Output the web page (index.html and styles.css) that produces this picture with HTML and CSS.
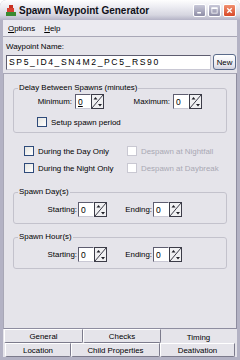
FILE: index.html
```html
<!DOCTYPE html>
<html lang="en">
<head>
    <meta charset="UTF-8">
    <title>Spawn Waypoint Generator</title>
    <link rel="stylesheet" href="styles.css">
</head>
<body>
    <div class="window">
        <div class="titlebar">
            <svg class="app-icon" width="10" height="11" viewBox="0 0 10 11">
                <rect x="3" y="0" width="4" height="3" fill="#c83020"/>
                <rect x="1" y="3" width="7" height="4" fill="#d84030"/>
                <rect x="0" y="7" width="10" height="4" fill="#3a8a30"/>
            </svg>
            <span class="title">Spawn Waypoint Generator</span>
            <div class="caption">
                <span class="cap-btn"><svg width="12" height="12" viewBox="0 0 12 12"><rect x="3" y="8" width="5" height="2" fill="#fff"/></svg></span>
                <span class="cap-btn"><svg width="12" height="12" viewBox="0 0 12 12"><rect x="2.5" y="2.5" width="7" height="7" fill="none" stroke="#fff"/><rect x="2" y="2" width="8" height="2" fill="#fff"/></svg></span>
                <span class="cap-btn close"><svg width="12" height="12" viewBox="0 0 12 12"><path d="M3 3 L9 9 M9 3 L3 9" stroke="#fff" stroke-width="1.8"/></svg></span>
            </div>
        </div>
        <div class="body">
            <div class="menubar">
                <span class="menu"><u>O</u>ptions</span>
                <span class="menu"><u>H</u>elp</span>
            </div>
            <div class="client">
                <div class="name-area">
                    <label class="name-label" for="wpname">Waypoint Name:</label>
                    <div class="name-row">
                        <input id="wpname" class="field name-field" type="text" value="SP5_ID4_SN4M2_PC5_RS90">
                        <button class="btn">New</button>
                    </div>
                </div>

                <div class="tabpage">
                    <fieldset class="group delay">
                        <legend>Delay Between Spawns (minutes)</legend>
                        <div class="spin-row">
                            <span class="lbl min-lbl">Minimum:</span>
                            <span class="spin"><span class="spin-val caret">0</span><svg class="spin-btn" viewBox="0 0 13 15"><rect x="0.5" y="0.5" width="12" height="14" fill="#f0f0f2" stroke="#3c3c48"/><path d="M1 14 L12 1" stroke="#3c3c48"/><path d="M2.5 5.5 L4.5 3 L6.5 5.5 Z M7 10 L11 10 L9 12.5 Z" fill="#202028"/></svg></span>
                            <span class="lbl max-lbl">Maximum:</span>
                            <span class="spin"><span class="spin-val">0</span><svg class="spin-btn" viewBox="0 0 13 15"><rect x="0.5" y="0.5" width="12" height="14" fill="#f0f0f2" stroke="#3c3c48"/><path d="M1 14 L12 1" stroke="#3c3c48"/><path d="M2.5 5.5 L4.5 3 L6.5 5.5 Z M7 10 L11 10 L9 12.5 Z" fill="#202028"/></svg></span>
                        </div>
                        <label class="check period"><span class="box"></span>Setup spawn period</label>
                    </fieldset>

                    <div class="check-grid">
                        <label class="check"><span class="box"></span>During the Day Only</label>
                        <label class="check off"><span class="box"></span>Despawn at Nightfall</label>
                        <label class="check"><span class="box"></span>During the Night Only</label>
                        <label class="check off"><span class="box"></span>Despawn at Daybreak</label>
                    </div>

                    <fieldset class="group range">
                        <legend>Spawn Day(s)</legend>
                        <div class="spin-row">
                            <span class="lbl start-lbl">Starting:</span>
                            <span class="spin"><span class="spin-val">0</span><svg class="spin-btn" viewBox="0 0 13 15"><rect x="0.5" y="0.5" width="12" height="14" fill="#f0f0f2" stroke="#3c3c48"/><path d="M1 14 L12 1" stroke="#3c3c48"/><path d="M2.5 5.5 L4.5 3 L6.5 5.5 Z M7 10 L11 10 L9 12.5 Z" fill="#202028"/></svg></span>
                            <span class="lbl end-lbl">Ending:</span>
                            <span class="spin"><span class="spin-val">0</span><svg class="spin-btn" viewBox="0 0 13 15"><rect x="0.5" y="0.5" width="12" height="14" fill="#f0f0f2" stroke="#3c3c48"/><path d="M1 14 L12 1" stroke="#3c3c48"/><path d="M2.5 5.5 L4.5 3 L6.5 5.5 Z M7 10 L11 10 L9 12.5 Z" fill="#202028"/></svg></span>
                        </div>
                    </fieldset>

                    <fieldset class="group range">
                        <legend>Spawn Hour(s)</legend>
                        <div class="spin-row">
                            <span class="lbl start-lbl">Starting:</span>
                            <span class="spin"><span class="spin-val">0</span><svg class="spin-btn" viewBox="0 0 13 15"><rect x="0.5" y="0.5" width="12" height="14" fill="#f0f0f2" stroke="#3c3c48"/><path d="M1 14 L12 1" stroke="#3c3c48"/><path d="M2.5 5.5 L4.5 3 L6.5 5.5 Z M7 10 L11 10 L9 12.5 Z" fill="#202028"/></svg></span>
                            <span class="lbl end-lbl">Ending:</span>
                            <span class="spin"><span class="spin-val">0</span><svg class="spin-btn" viewBox="0 0 13 15"><rect x="0.5" y="0.5" width="12" height="14" fill="#f0f0f2" stroke="#3c3c48"/><path d="M1 14 L12 1" stroke="#3c3c48"/><path d="M2.5 5.5 L4.5 3 L6.5 5.5 Z M7 10 L11 10 L9 12.5 Z" fill="#202028"/></svg></span>
                        </div>
                    </fieldset>
                </div>

                <div class="tabs">
                    <div class="tab-row near">
                        <span class="tab t-general">General</span>
                        <span class="tab t-checks">Checks</span>
                        <span class="tab t-timing active">Timing</span>
                    </div>
                    <div class="tab-row far">
                        <span class="tab t-location">Location</span>
                        <span class="tab t-child">Child Properties</span>
                        <span class="tab t-deact">Deativation</span>
                    </div>
                </div>
            </div>
        </div>
    </div>
</body>
</html>
```

FILE: styles.css
```css
* {
    box-sizing: border-box;
}
body {
    margin: 0;
    background: #fff;
    font-family: "Liberation Sans", Arial, sans-serif;
    font-size: 7.9px;
    color: #000;
}

.window {
    width: 240px;
    height: 360px;
    display: flex;
    flex-direction: column;
    background: #b3b2c4;
    border-radius: 6px 6px 0 0;
    overflow: hidden;
}

.titlebar {
    height: 20px;
    flex: none;
    display: flex;
    align-items: center;
    padding: 0 4px 0 6px;
    background: linear-gradient(#fefefe, #ececf2 35%, #d6d6e0 75%, #b4b3c6);
}
.app-icon {
    flex: none;
}
.title {
    margin-left: 3px;
    font-weight: bold;
    font-size: 10px;
    color: #101018;
}
.caption {
    margin-left: auto;
    display: flex;
    gap: 2px;
}
.cap-btn {
    width: 13px;
    height: 13px;
    border: 1px solid #fff;
    border-radius: 2px;
    background: linear-gradient(#c8c8d8, #8e8da6);
    display: flex;
    align-items: center;
    justify-content: center;
}
.cap-btn svg {
    width: 9px;
    height: 9px;
}
.cap-btn.close {
    background: linear-gradient(#f09070, #d84828);
}

.body {
    flex: 1;
    display: flex;
    flex-direction: column;
    padding: 0 3px 4px 3px;
}
.menubar {
    height: 16px;
    flex: none;
    display: flex;
    align-items: center;
    gap: 9px;
    padding-left: 5px;
    background: #ebeaf0;
}
.client {
    flex: 1;
    display: flex;
    flex-direction: column;
    background: #e5e4ea;
    border-top: 1px solid #a8a7b6;
}

.name-area {
    padding: 5px 1px 3px 3px;
}
.name-label {
    display: block;
    margin-bottom: 2px;
    line-height: 10px;
}
.name-row {
    display: flex;
    align-items: center;
    gap: 2px;
}
.field {
    background: #fff;
    border: 1px solid;
    border-color: #5e5d70 #c9c8d4 #c9c8d4 #5e5d70;
}
.name-field {
    width: 206px;
    height: 15px;
    margin: 0;
    padding: 0 2px;
    font: inherit;
    font-size: 8.6px;
    letter-spacing: 1.6px;
    outline: none;
}
.btn {
    width: 23px;
    height: 16px;
    margin: 0;
    padding: 0;
    font: inherit;
    border: 1px solid #5a6a8a;
    border-radius: 3px;
    background: linear-gradient(#ffffff, #e8e8f0 70%, #d0d0dc);
}

.tabpage {
    height: 256px;
    border: 1px solid #8e8da0;
    border-color: #a8a7b6 #8e8da0 #8e8da0 #a8a7b6;
    padding: 9px 9px 0 9px;
}

.group {
    margin: 0;
    padding: 0;
    border: 1px solid #c3c2cc;
    border-radius: 3px;
}
.group legend {
    padding: 0 1px;
    margin-left: 4px;
    line-height: 10px;
}

.spin-row {
    display: flex;
    align-items: center;
    height: 15px;
}
.lbl {
    text-align: right;
}
.spin {
    display: flex;
    height: 15px;
}
.spin-val {
    width: 16px;
    height: 15px;
    padding: 1px 2px;
    background: #fff;
    border: 1px solid;
    border-color: #5e5d70 #fff #c9c8d4 #5e5d70;
    line-height: 12px;
    font-size: 8.5px;
}
.spin-val.caret {
    text-decoration: underline;
}
.spin-btn {
    width: 13px;
    height: 15px;
}

.delay {
    height: 50px;
}
.delay .spin-row {
    margin-top: 1px;
}
.min-lbl {
    width: 58px;
    margin-right: 3px;
}
.max-lbl {
    width: 66px;
    margin-right: 3px;
}
.check {
    display: flex;
    align-items: center;
    height: 10px;
}
.box {
    width: 10px;
    height: 10px;
    margin-right: 4px;
    background: linear-gradient(135deg, #e4e4e0, #fff);
    border: 1px solid #2e4a7a;
}
.period {
    margin: 8px 0 0 23px;
}

.check-grid {
    display: grid;
    grid-template-columns: 103px 1fr;
    row-gap: 7px;
    padding: 13px 0 0 11px;
}
.check.off {
    color: #a9a8b4;
}
.check.off .box {
    background: #fff;
    border-color: #c9c8d2;
}

.range {
    height: 37px;
}
.check-grid + .range {
    margin-top: 14px;
}
.range + .range {
    margin-top: 8px;
}
.range .spin-row {
    margin-top: 5px;
}
.start-lbl {
    width: 63px;
    margin-right: 1px;
}
.end-lbl {
    width: 45px;
    margin-right: 1px;
}

.tabs {
    display: flex;
    flex-direction: column;
    padding-left: 1px;
}
.tab-row {
    display: flex;
    height: 14px;
}
.tab {
    display: flex;
    align-items: center;
    justify-content: center;
    height: 14px;
    border: 1px solid;
    border-color: #fff #7c7b8c #7c7b8c #fff;
    border-radius: 0 0 2px 2px;
    background: #e5e4ea;
}
.t-general {
    width: 79px;
}
.t-checks {
    width: 78px;
}
.t-timing {
    width: 75px;
}
.tab.active {
    border-color: transparent;
    padding-top: 3px;
}
.far {
    padding-left: 1px;
}
.t-location {
    width: 66px;
}
.t-child {
    width: 89px;
}
.t-deact {
    width: 75px;
}
```
